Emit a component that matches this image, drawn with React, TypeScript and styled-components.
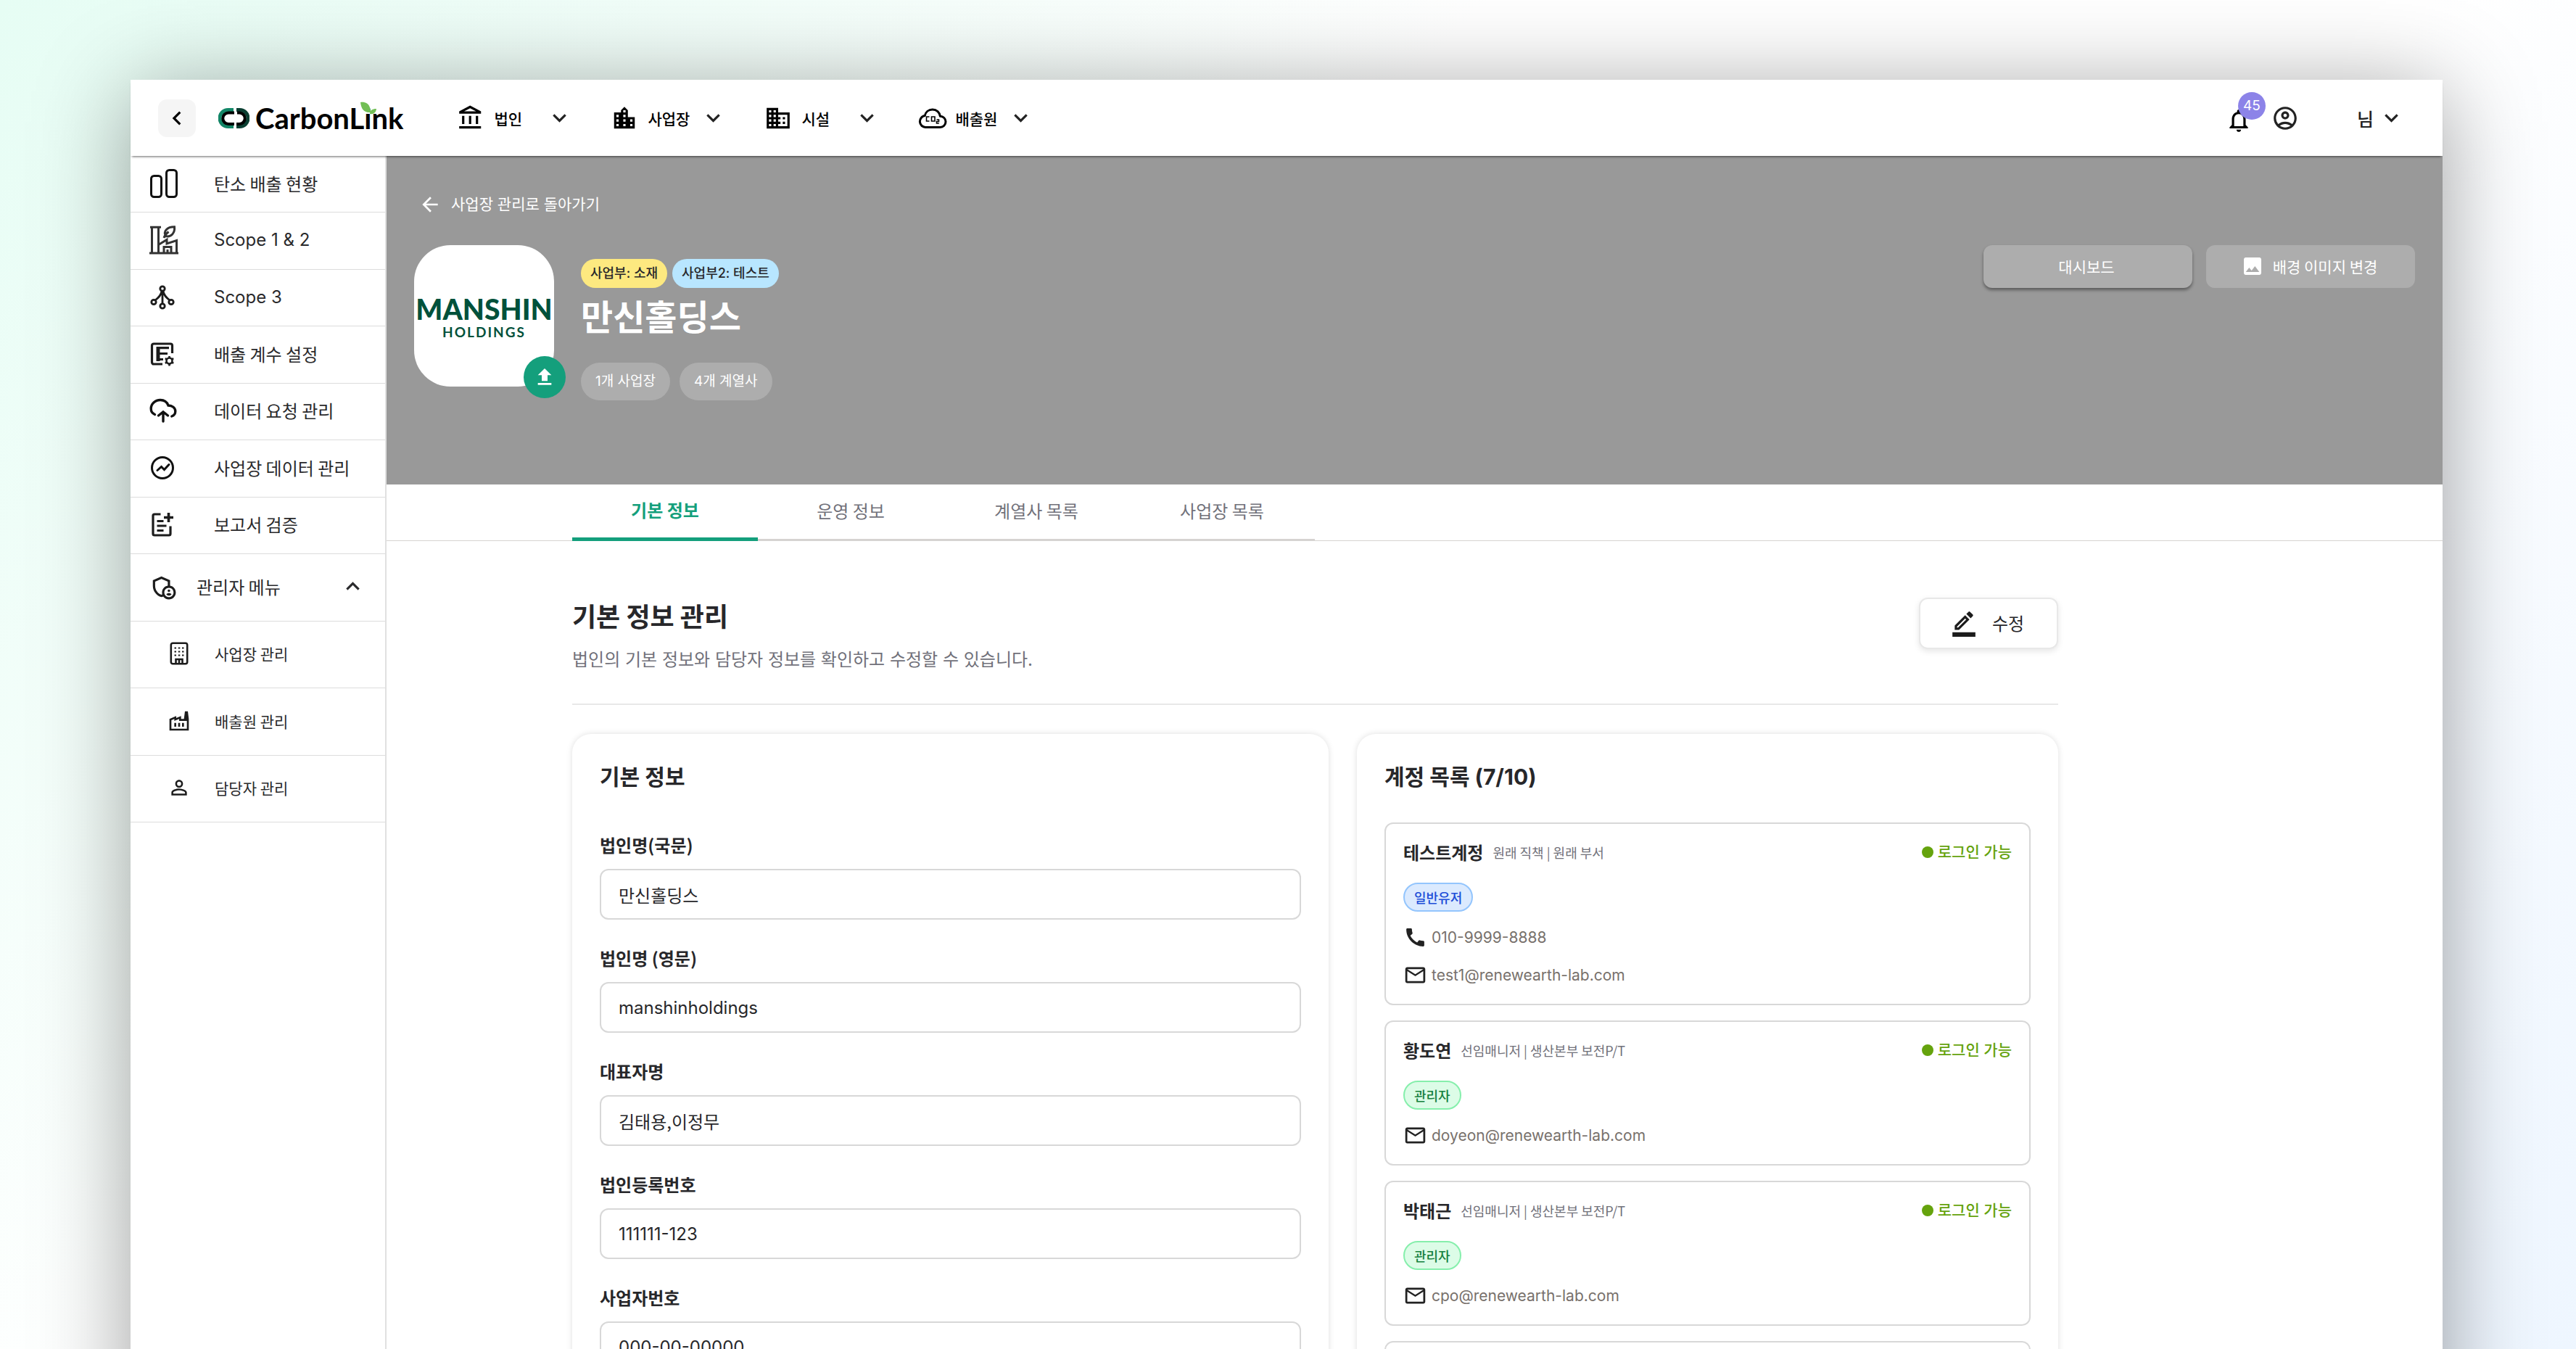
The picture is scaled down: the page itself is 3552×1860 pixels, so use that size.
import React from "react";
import styled, { createGlobalStyle, css } from "styled-components";
import {
  MdOutlineAccountBalance,
  MdLocationCity,
  MdDomain,
  MdKeyboardArrowDown,
  MdKeyboardArrowUp,
  MdKeyboardArrowLeft,
  MdNotificationsNone,
  MdOutlineAccountCircle,
  MdOutlineAdminPanelSettings,
  MdOutlineFactory,
  MdPersonOutline,
  MdArrowBack,
  MdFileUpload,
  MdImage,
  MdOutlineBorderColor,
  MdCall,
  MdMailOutline,
} from "react-icons/md";

const korean = `"Noto Sans CJK KR", "Noto Sans", sans-serif`;
const latin = `Inter, "Noto Sans CJK KR", sans-serif`;

const GlobalStyle = createGlobalStyle`
  *, *::before, *::after { box-sizing: border-box; }
  body { margin: 0; font-family: ${korean}; color: #27272a; }
  h1, h2, h3, p, ul { margin: 0; padding: 0; }
  ul { list-style: none; }
  button, input { font: inherit; color: inherit; margin: 0; }
  button { border: 0; background: none; padding: 0; cursor: pointer; }
  a { color: inherit; text-decoration: none; }
  svg { display: block; flex: none; }
`;

const Page = styled.div`
  height: 100vh;
  overflow: hidden;
  padding: 110px 184px 0 180px;
  background: linear-gradient(135deg, #e6fdf4 0%, #ffffff 38%, #ffffff 62%, #eef6ff 100%);
`;

const Frame = styled.div`
  display: flex;
  flex-direction: column;
  min-height: 100%;
  background: #ffffff;
  box-shadow: 0 16px 120px rgba(0, 0, 0, 0.38);
`;

/* Header */

const Header = styled.header`
  position: relative;
  z-index: 1;
  display: flex;
  align-items: center;
  height: 105px;
  padding: 0 52px 0 38px;
  background: #ffffff;
  box-shadow: 0 3px 3px -2px rgba(0, 0, 0, 0.6);
`;

const CollapseButton = styled.button`
  display: grid;
  place-items: center;
  width: 52px;
  height: 52px;
  border-radius: 12px;
  background: #f5f5f5;
  color: #000000;
`;

const Brand = styled.a`
  display: flex;
  align-items: center;
  gap: 8px;
  margin-left: 31px;
`;

const BrandName = styled.span`
  position: relative;
  font: 700 40px/48px Lato, sans-serif;
  color: #000000;
`;

const BrandLeaf = styled.svg`
  position: absolute;
  top: 1px;
  right: 36px;
`;

const Nav = styled.nav`
  display: flex;
  gap: 52px;
  margin-left: 74px;
`;

const NavItem = styled.button`
  display: flex;
  align-items: center;
  width: 160px;
  font-size: 21px;
  line-height: 32px;
  font-weight: 500;
  color: #000000;
  & > svg:last-child {
    margin-left: auto;
    color: #222222;
  }
`;

const NavIcon = styled.span`
  display: grid;
  place-items: center;
  width: 38px;
`;

const NavLabel = styled.span`
  margin-left: 13px;
`;

const HeaderTools = styled.div`
  display: flex;
  align-items: center;
  margin-left: auto;
  color: #222222;
`;

const BellButton = styled.button`
  position: relative;
  margin-right: 26px;
  padding-top: 6px;
  color: #000000;
`;

const BellBadge = styled.span`
  position: absolute;
  left: 18px;
  top: -14px;
  display: grid;
  place-items: center;
  width: 38px;
  height: 38px;
  border-radius: 50%;
  background: #8c83e8;
  color: #ffffff;
  font: 400 19px/20px Inter, sans-serif;
`;

const UserButton = styled.button`
  display: flex;
  align-items: center;
  gap: 6px;
  margin-left: 80px;
  font-size: 25px;
  line-height: 36px;
  font-weight: 500;
`;

/* Layout */

const Body = styled.div`
  display: flex;
  flex: 1;
`;

const Sidebar = styled.aside`
  flex: none;
  width: 353px;
  border-right: 2px solid #e0e0e0;
`;

const MenuList = styled.ul<{ $height: number }>`
  display: grid;
  grid-auto-rows: 1fr;
  height: ${(p) => p.$height}px;
`;

const MenuItem = styled.li`
  display: flex;
  border-bottom: 1px solid #dcdcdc;
`;

const menuEntry = css`
  display: flex;
  flex: 1;
  align-items: center;
  color: #2a2a2c;
  line-height: 36px;
`;

const MenuLink = styled.a<{ $sub?: boolean }>`
  ${menuEntry}
  gap: ${(p) => (p.$sub ? 31 : 53)}px;
  padding: 0 0 2px ${(p) => (p.$sub ? 49 : 26)}px;
  font-size: ${(p) => (p.$sub ? 21 : 24)}px;
`;

const LatinText = styled.span`
  font-family: ${latin};
`;

const MenuToggle = styled.button`
  ${menuEntry}
  padding: 0 26px 2px;
  font-size: 24px;
  & > span {
    margin-left: 27px;
  }
  & > svg:last-child {
    margin-left: auto;
  }
`;

const IconSlot = styled.span`
  display: grid;
  place-items: center;
  width: 36px;
  color: #1c1c1c;
`;

const Main = styled.main`
  flex: 1;
  min-width: 0;
`;

/* Hero */

const Hero = styled.section`
  height: 453px;
  padding: 50px 38px 0 38px;
  background: #999999;
  color: #ffffff;
`;

const BackLink = styled.a`
  display: flex;
  align-items: center;
  gap: 13px;
  width: max-content;
  height: 34px;
  padding-left: 6px;
  font-family: ${latin};
  font-size: 21px;
  line-height: 34px;
`;

const HeroRow = styled.div`
  display: flex;
  align-items: flex-start;
  margin-top: 39px;
`;

const CompanyLogo = styled.div`
  position: relative;
  display: flex;
  flex: none;
  flex-direction: column;
  align-items: center;
  justify-content: center;
  width: 193px;
  height: 195px;
  padding-top: 4px;
  border-radius: 50px;
  background: #ffffff;
  color: #00513b;
`;

const LogoName = styled.span`
  font: 900 39px/40px Lato, sans-serif;
`;

const LogoSub = styled.span`
  font: 700 19px/24px Lato, sans-serif;
  letter-spacing: 2px;
`;

const UploadButton = styled.button`
  position: absolute;
  right: -16px;
  bottom: -16px;
  display: grid;
  place-items: center;
  width: 58px;
  height: 58px;
  border-radius: 50%;
  background: #149f7c;
  color: #ffffff;
`;

const CompanyInfo = styled.div`
  margin: 19px 0 0 37px;
`;

const TagRow = styled.div<{ $gap: number }>`
  display: flex;
  gap: ${(p) => p.$gap}px;
  font-family: ${latin};
`;

const Tag = styled.span<{ $color: string }>`
  padding: 0 13px;
  border-radius: 20px;
  background: ${(p) => p.$color};
  color: #27272a;
  font-size: 18px;
  line-height: 40px;
  font-weight: 500;
`;

const CompanyName = styled.h1`
  margin: 6px 0 35px;
  font-size: 48px;
  line-height: 62px;
  font-weight: 700;
`;

const CountChip = styled.span`
  padding: 0 20px;
  border-radius: 26px;
  background: #adadad;
  font-size: 19px;
  line-height: 52px;
`;

const HeroActions = styled.div`
  display: flex;
  gap: 19px;
  margin-left: auto;
`;

const HeroButton = styled.button<{ $raised?: boolean }>`
  display: flex;
  align-items: center;
  justify-content: center;
  gap: 12px;
  width: 288px;
  height: 59px;
  padding: 0 4px 2px 0;
  border-radius: 12px;
  background: #adadad;
  box-shadow: ${(p) => (p.$raised ? "0 3px 4px rgba(0, 0, 0, 0.4)" : "none")};
  font-size: 21px;
  line-height: 32px;
`;

/* Tabs */

const Tabs = styled.div`
  display: flex;
  height: 78px;
  padding-left: 256px;
  box-shadow: inset 0 -1px 0 #d6d3d1;
`;

const Tab = styled.button<{ $active?: boolean }>`
  width: 256px;
  padding-bottom: 4px;
  border-bottom: ${(p) => (p.$active ? "5px solid #149f7c" : "3px solid #d6d3d1")};
  color: ${(p) => (p.$active ? "#149f7c" : "#71717a")};
  font-size: 24px;
  line-height: 36px;
  font-weight: ${(p) => (p.$active ? 700 : 400)};
`;

/* Content */

const Content = styled.div`
  max-width: 2305px;
  padding: 78px 0 0 256px;
`;

const ContentHead = styled.div`
  display: flex;
  justify-content: space-between;
  align-items: flex-start;
  padding-bottom: 42px;
  border-bottom: 2px solid #e8e8e8;
`;

const Title = styled.h2`
  font-size: 36px;
  line-height: 48px;
  font-weight: 700;
`;

const Subtitle = styled.p`
  margin-top: 20px;
  color: #71717a;
  font-family: ${latin};
  font-size: 24px;
  line-height: 36px;
`;

const EditButton = styled.button`
  display: flex;
  align-items: center;
  justify-content: center;
  gap: 20px;
  width: 192px;
  height: 71px;
  padding: 0 4px 2px 0;
  border: 2px solid #e8e8e8;
  border-radius: 12px;
  background: #ffffff;
  box-shadow: 0 3px 8px rgba(0, 0, 0, 0.1);
  font-size: 24px;
  line-height: 36px;
`;

const Columns = styled.div`
  display: grid;
  grid-template-columns: 1043fr 967fr;
  gap: 39px;
  margin-top: 40px;
`;

const Card = styled.section`
  padding: 36px 38px 38px;
  border-radius: 26px;
  background: #ffffff;
  box-shadow: 0 0 9px rgba(0, 0, 0, 0.13);
`;

const CardTitle = styled.h3`
  font-family: ${latin};
  font-size: 30px;
  line-height: 46px;
  font-weight: 700;
`;

const FieldList = styled.div`
  display: grid;
  gap: 35px;
  margin-top: 53px;
`;

const Field = styled.div`
  display: grid;
  gap: 15px;
`;

const FieldLabel = styled.label`
  font-size: 24px;
  line-height: 36px;
  font-weight: 700;
`;

const FieldInput = styled.input<{ $latin?: boolean }>`
  width: 100%;
  height: 70px;
  padding: 0 24px;
  border: 2px solid #d8d8d8;
  border-radius: 12px;
  background: #ffffff;
  outline: none;
  font-family: ${(p) => (p.$latin ? latin : korean)};
  font-size: 24px;
`;

const AccountList = styled.ul`
  display: grid;
  gap: 21px;
  margin-top: 40px;
`;

const Account = styled.li`
  display: grid;
  gap: 19px;
  min-height: 100px;
  padding: 23px 24px;
  border: 2px solid #d8d8d8;
  border-radius: 12px;
`;

const AccountHead = styled.div`
  display: flex;
  align-items: center;
  height: 32px;
  margin-bottom: 7px;
`;

const AccountName = styled.strong`
  font-size: 24px;
  line-height: 32px;
  font-weight: 700;
`;

const AccountRole = styled.span`
  margin-left: 13px;
  color: #71717a;
  font-size: 18px;
  line-height: 32px;
`;

const AccountStatus = styled.span`
  display: flex;
  align-items: center;
  gap: 6px;
  margin-left: auto;
  color: #65a30d;
  font-family: ${latin};
  font-size: 21px;
  line-height: 32px;
  font-weight: 500;
  &::before {
    content: "";
    width: 16px;
    height: 16px;
    border-radius: 50%;
    background: #65a30d;
  }
`;

const AccountBadge = styled.span<{ $admin: boolean }>`
  justify-self: start;
  height: 40px;
  padding: 0 13px;
  border: 2px solid ${(p) => (p.$admin ? "#86efac" : "#93c5fd")};
  border-radius: 20px;
  background: ${(p) => (p.$admin ? "#dcfce7" : "#dbeafe")};
  color: ${(p) => (p.$admin ? "#15803d" : "#1d4ed8")};
  font-size: 18px;
  line-height: 36px;
  font-weight: 500;
`;

const Contact = styled.a`
  display: flex;
  align-items: center;
  gap: 6px;
  height: 33px;
  color: #78716c;
  font: 400 21px/32px Inter, sans-serif;
  & > svg {
    color: #222222;
  }
`;

/* Icons */

const LinkMark = () => (
  <svg width="43" height="28" viewBox="0 0 43 28" fill="none">
    <defs>
      <linearGradient id="markLeft" x1="0" y1="28" x2="20" y2="0">
        <stop offset="0" stopColor="#0b4f3d" />
        <stop offset="1" stopColor="#17a37d" />
      </linearGradient>
      <linearGradient id="markRight" x1="24" y1="0" x2="43" y2="28">
        <stop offset="0" stopColor="#0b3f32" />
        <stop offset="1" stopColor="#22b68c" />
      </linearGradient>
    </defs>
    <path d="M21 2.5H13.5a11.5 11.5 0 0 0 0 23H21" stroke="url(#markLeft)" strokeWidth="5" />
    <path d="M22 6.5H14a7.500 7.500 0 0 0 0 15.500H22" stroke="#000" strokeWidth="4" />
    <path d="M25 2.500H29.500a11 11 0 0 1 0 23H25" stroke="url(#markRight)" strokeWidth="5" />
    <path d="M26 6.500H29a7.500 7.500 0 0 1 0 15.500H25" stroke="#000" strokeWidth="4" />
  </svg>
);

const CloudCo2Icon = () => (
  <svg width="40" height="36" viewBox="0 0 40 36" fill="none" stroke="currentColor">
    <path
      d="M10 30.500a8 8 0 0 1-.8-15.900C10.200 9.400 14.500 6 19.800 6c5.600 0 9.900 4 10.600 9.300 4.300.1 7.600 3.300 7.600 7.500 0 4.400-3.300 7.700-7.700 7.700Z"
      strokeWidth="3"
      strokeLinejoin="round"
    />
    <path d="M15.500 16H11.500v6h4M18.500 16h4.500v6h-4.500ZM25.500 20h3v2.500h-3V25h3.300" strokeWidth="1.600" />
  </svg>
);

const BarsIcon = () => (
  <svg width="40" height="40" viewBox="0 0 40 40" fill="none" stroke="#111" strokeWidth="3">
    <rect x="2.500" y="9.500" width="14" height="29" rx="4" />
    <rect x="23.500" y="1.500" width="14" height="37" rx="4" />
  </svg>
);

const EcoFactoryIcon = () => (
  <svg width="40" height="40" viewBox="0 0 40 40" fill="none" stroke="#333" strokeWidth="3">
    <path d="M1 2.300h15M3.500 2v36M12.500 2v36M0 38h40" />
    <path d="M12.500 26.500l11.500-7v5.500l13.500-4.500V38M20 38v-8.500h10V38M25 33v5" />
    <path d="M20 17c1-3 3-6 6.500-8.500M22.500 14.500C19 8 24 1.800 34.500 1.800 35.500 10 30 16.500 22.500 14.500Z" />
  </svg>
);

const NodesIcon = () => (
  <svg width="34" height="34" viewBox="0 0 34 34" fill="none" stroke="#1c1c1c" strokeWidth="2.800">
    <circle cx="17" cy="5" r="3.200" />
    <circle cx="5" cy="23.500" r="3.200" />
    <circle cx="29" cy="23.500" r="3.200" />
    <circle cx="17" cy="29" r="3.200" />
    <path d="M17 8v18M16 8.500c-1 6-4.500 9-9 12.500M18 8.500c1 6 4.500 9 9 12.500" />
  </svg>
);

const FactorIcon = () => (
  <svg width="34" height="34" viewBox="0 0 34 34" fill="none" stroke="#1c1c1c" strokeWidth="3.200">
    <path d="M17 31H5a2.500 2.500 0 0 1-2.500-2.500v-23A2.500 2.500 0 0 1 5 3h23a2.500 2.500 0 0 1 2.500 2.500V16" />
    <path d="M11 7v20" strokeWidth="5" />
    <path d="M10 8.700h16M10 16.500h14M10 24.500h8" />
    <circle cx="26.500" cy="26.500" r="4" strokeWidth="2.600" />
    <path
      d="M26.500 20v2M26.500 31v2.500M20.800 23.200l1.900 1.100M30.300 28.700l1.900 1.100M20.800 29.800l1.900-1.100M30.300 24.300l1.900-1.100"
      strokeWidth="2.600"
    />
  </svg>
);

const CloudUploadIcon = () => (
  <svg width="38" height="36" viewBox="0 0 38 36" fill="none" stroke="#111" strokeWidth="3.400" strokeLinecap="round">
    <path d="M7.500 23.500C4 22 2.200 19 2.200 15.500 2.200 9 8 3.500 15 3.500c5.500 0 9.300 3 11 7.500 5.500 0 9.800 3.300 9.800 8 0 3.500-2 6-5 7" />
    <path d="M19 33V20M12.500 25l6.500-5 6.500 5" />
  </svg>
);

const TrendIcon = () => (
  <svg width="34" height="34" viewBox="0 0 34 34" fill="none" stroke="#111" strokeWidth="3" strokeLinecap="round">
    <circle cx="17" cy="17" r="14.500" />
    <path d="M10 20.500l5.500-5 4 4 6.500-7" />
  </svg>
);

const ReportIcon = () => (
  <svg width="30" height="34" viewBox="0 0 30 34" fill="none" stroke="#1c1c1c" strokeWidth="3.200">
    <path d="M12.500 3H4a2 2 0 0 0-2 2v25a2 2 0 0 0 2 2h20a2 2 0 0 0 2-2V19.500" />
    <path d="M23.500 1v13M17 7.500h13" strokeWidth="3.600" />
    <path d="M7.500 12.500h9M7.500 19h13M7.500 25.500h9" strokeWidth="2.800" />
  </svg>
);

const BuildingIcon = () => (
  <svg width="26" height="32" viewBox="0 0 26 32" fill="none" stroke="#1c1c1c" strokeWidth="2.600">
    <rect x="1.800" y="1.800" width="22.400" height="28.400" rx="2.500" />
    <path d="M8.500 30v-6h9v6M13 24v6" />
    <path
      d="M6.500 8.500h2.500M11.800 8.500h2.500M17 8.500h2.500M6.500 13.500h2.500M11.800 13.500h2.500M17 13.500h2.500M6.500 18.500h2.500M11.800 18.500h2.500M17 18.500h2.500"
      strokeWidth="2.200"
    />
  </svg>
);

/* Data */

const navItems = [
  { label: "법인", icon: <MdOutlineAccountBalance size={38} /> },
  { label: "사업장", icon: <MdLocationCity size={38} /> },
  { label: "시설", icon: <MdDomain size={38} /> },
  { label: "배출원", icon: <CloudCo2Icon /> },
];

const menuItems = [
  { label: "탄소 배출 현황", icon: <BarsIcon /> },
  { label: "Scope 1 & 2", icon: <EcoFactoryIcon />, latin: true },
  { label: "Scope 3", icon: <NodesIcon />, latin: true },
  { label: "배출 계수 설정", icon: <FactorIcon /> },
  { label: "데이터 요청 관리", icon: <CloudUploadIcon /> },
  { label: "사업장 데이터 관리", icon: <TrendIcon /> },
  { label: "보고서 검증", icon: <ReportIcon /> },
];

const adminItems = [
  { label: "사업장 관리", icon: <BuildingIcon /> },
  { label: "배출원 관리", icon: <MdOutlineFactory size={32} /> },
  { label: "담당자 관리", icon: <MdPersonOutline size={32} /> },
];

const tabs = ["기본 정보", "운영 정보", "계열사 목록", "사업장 목록"];

const fields = [
  { id: "nameKo", label: "법인명(국문)", value: "만신홀딩스" },
  { id: "nameEn", label: "법인명 (영문)", value: "manshinholdings", latin: true },
  { id: "ceo", label: "대표자명", value: "김태용,이정무" },
  { id: "corpNo", label: "법인등록번호", value: "111111-123", latin: true },
  { id: "bizNo", label: "사업자번호", value: "000-00-00000", latin: true },
];

const accounts = [
  {
    name: "테스트계정",
    role: "원래 직책 | 원래 부서",
    admin: false,
    phone: "010-9999-8888",
    email: "test1@renewearth-lab.com",
  },
  { name: "황도연", role: "선임매니저 | 생산본부 보전P/T", admin: true, email: "doyeon@renewearth-lab.com" },
  { name: "박태근", role: "선임매니저 | 생산본부 보전P/T", admin: true, email: "cpo@renewearth-lab.com" },
];

export default function App() {
  return (
    <Page>
      <GlobalStyle />
      <Frame>
        <Header>
          <CollapseButton type="button">
            <MdKeyboardArrowLeft size={38} />
          </CollapseButton>
          <Brand href="#">
            <LinkMark />
            <BrandName>
              CarbonLink
              <BrandLeaf width="24" height="18" viewBox="0 0 24 18">
                <path d="M1 1C9 0 15 4 15 15 6 16 2 10 1 1Z" fill="#72bf55" />
                <path d="M14 17c0-5 3-7 9-7-.5 5-4 8-9 7Z" fill="#72bf55" />
              </BrandLeaf>
            </BrandName>
          </Brand>
          <Nav>
            {navItems.map((item) => (
              <NavItem key={item.label} type="button">
                <NavIcon>{item.icon}</NavIcon>
                <NavLabel>{item.label}</NavLabel>
                <MdKeyboardArrowDown size={37} />
              </NavItem>
            ))}
          </Nav>
          <HeaderTools>
            <BellButton type="button">
              <MdNotificationsNone size={38} />
              <BellBadge>45</BellBadge>
            </BellButton>
            <button type="button">
              <MdOutlineAccountCircle size={38} />
            </button>
            <UserButton type="button">
              님
              <MdKeyboardArrowDown size={37} />
            </UserButton>
          </HeaderTools>
        </Header>

        <Body>
          <Sidebar>
            <MenuList $height={549}>
              {menuItems.map((item) => (
                <MenuItem key={item.label}>
                  <MenuLink href="#">
                    <IconSlot>{item.icon}</IconSlot>
                    {item.latin ? <LatinText>{item.label}</LatinText> : item.label}
                  </MenuLink>
                </MenuItem>
              ))}
            </MenuList>
            <MenuList $height={370}>
              <MenuItem>
                <MenuToggle type="button">
                  <MdOutlineAdminPanelSettings size={38} color="#1c1c1c" />
                  <span>관리자 메뉴</span>
                  <MdKeyboardArrowUp size={37} />
                </MenuToggle>
              </MenuItem>
              {adminItems.map((item) => (
                <MenuItem key={item.label}>
                  <MenuLink href="#" $sub>
                    <IconSlot>{item.icon}</IconSlot>
                    {item.label}
                  </MenuLink>
                </MenuItem>
              ))}
            </MenuList>
          </Sidebar>

          <Main>
            <Hero>
              <BackLink href="#">
                <MdArrowBack size={32} />
                사업장 관리로 돌아가기
              </BackLink>
              <HeroRow>
                <CompanyLogo>
                  <LogoName>MANSHIN</LogoName>
                  <LogoSub>HOLDINGS</LogoSub>
                  <UploadButton type="button">
                    <MdFileUpload size={32} />
                  </UploadButton>
                </CompanyLogo>
                <CompanyInfo>
                  <TagRow $gap={7}>
                    <Tag $color="#fde980">사업부: 소재</Tag>
                    <Tag $color="#b8e6ff">사업부2: 테스트</Tag>
                  </TagRow>
                  <CompanyName>만신홀딩스</CompanyName>
                  <TagRow $gap={13}>
                    <CountChip>1개 사업장</CountChip>
                    <CountChip>4개 계열사</CountChip>
                  </TagRow>
                </CompanyInfo>
                <HeroActions>
                  <HeroButton type="button" $raised>
                    대시보드
                  </HeroButton>
                  <HeroButton type="button">
                    <MdImage size={32} />
                    배경 이미지 변경
                  </HeroButton>
                </HeroActions>
              </HeroRow>
            </Hero>

            <Tabs>
              {tabs.map((tab, i) => (
                <Tab key={tab} type="button" $active={i === 0}>
                  {tab}
                </Tab>
              ))}
            </Tabs>

            <Content>
              <ContentHead>
                <div>
                  <Title>기본 정보 관리</Title>
                  <Subtitle>법인의 기본 정보와 담당자 정보를 확인하고 수정할 수 있습니다.</Subtitle>
                </div>
                <EditButton type="button">
                  <MdOutlineBorderColor size={38} color="#1c1c1c" />
                  수정
                </EditButton>
              </ContentHead>

              <Columns>
                <Card>
                  <CardTitle>기본 정보</CardTitle>
                  <FieldList>
                    {fields.map((f) => (
                      <Field key={f.id}>
                        <FieldLabel htmlFor={f.id}>{f.label}</FieldLabel>
                        <FieldInput id={f.id} $latin={f.latin} defaultValue={f.value} readOnly />
                      </Field>
                    ))}
                  </FieldList>
                </Card>
                <Card>
                  <CardTitle>계정 목록 (7/10)</CardTitle>
                  <AccountList>
                    {accounts.map((a) => (
                      <Account key={a.name}>
                        <AccountHead>
                          <AccountName>{a.name}</AccountName>
                          <AccountRole>{a.role}</AccountRole>
                          <AccountStatus>로그인 가능</AccountStatus>
                        </AccountHead>
                        <AccountBadge $admin={a.admin}>{a.admin ? "관리자" : "일반유저"}</AccountBadge>
                        {a.phone && (
                          <Contact href={`tel:${a.phone}`}>
                            <MdCall size={33} />
                            {a.phone}
                          </Contact>
                        )}
                        <Contact href={`mailto:${a.email}`}>
                          <MdMailOutline size={33} />
                          {a.email}
                        </Contact>
                      </Account>
                    ))}
                    <Account />
                  </AccountList>
                </Card>
              </Columns>
            </Content>
          </Main>
        </Body>
      </Frame>
    </Page>
  );
}
